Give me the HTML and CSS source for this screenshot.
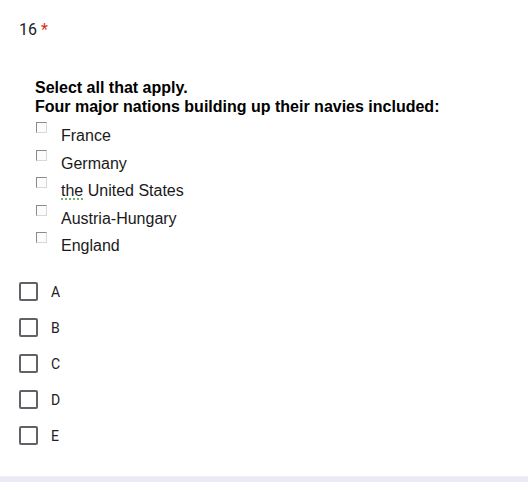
FILE: index.html
```html
<!DOCTYPE html>
<html>
<head>
<meta charset="utf-8">
<link rel="stylesheet" href="styles.css">
</head>
<body>
<div class="card">
  <div class="qnum">16 <span class="req">*</span></div>
  <div class="prompt">
    <div>Select all that apply.</div>
    <div>Four major nations building up their navies included:</div>
    <ul class="opts">
      <li><span class="cb"></span><span>France</span></li>
      <li><span class="cb"></span><span>Germany</span></li>
      <li><span class="cb"></span><span><span class="spell">the</span> United States</span></li>
      <li><span class="cb"></span><span>Austria-Hungary</span></li>
      <li><span class="cb"></span><span>England</span></li>
    </ul>
  </div>
  <ul class="choices">
    <li><span class="box"></span><span>A</span></li>
    <li><span class="box"></span><span>B</span></li>
    <li><span class="box"></span><span>C</span></li>
    <li><span class="box"></span><span>D</span></li>
    <li><span class="box"></span><span>E</span></li>
  </ul>
</div>
</body>
</html>
```
FILE: styles.css
```css
html, body {
  margin: 0;
  padding: 0;
}
body {
  background: #ebe9f5;
  height: 482px;
  overflow: hidden;
}
.card {
  background: #fff;
  height: 477px;
  box-sizing: border-box;
  border-bottom: 1px solid #f0eff4;
  padding: 18px 0 0 19px;
}
.qnum {
  font-family: Roboto, "Liberation Sans", sans-serif;
  font-size: 16px;
  line-height: 24px;
  color: #202124;
}
.req {
  color: #d93025;
}
.prompt {
  margin-top: 36px;
  padding-left: 16px;
  font-family: "Liberation Sans", Arial, sans-serif;
  font-weight: bold;
  font-size: 16px;
  line-height: 19px;
  color: #000;
}
.opts {
  list-style: none;
  margin: 6px 0 0 0;
  padding: 0 0 0 1px;
  font-weight: normal;
  color: #1a1a1a;
}
.opts li {
  display: flex;
  align-items: flex-start;
  height: 27.5px;
  line-height: 27.5px;
}
.cb {
  width: 11px;
  height: 11px;
  box-sizing: border-box;
  margin-top: 0;
  margin-right: 14px;
  border-top: 1px solid #8a8a8a;
  border-left: 1px solid #8a8a8a;
  border-right: 1px solid #d8d8d8;
  border-bottom: 1px solid #d8d8d8;
  background: #fcfcfc;
  flex: none;
}
.spell {
  text-decoration: underline dotted #3c9a3c;
  text-underline-offset: 3px;
}
.choices {
  list-style: none;
  margin: 14px 0 0 0;
  padding: 0;
  font-family: Roboto, "Liberation Sans", sans-serif;
  font-size: 14px;
  color: #202124;
}
.choices li {
  display: flex;
  align-items: center;
  height: 36px;
}
.box {
  width: 19px;
  height: 19px;
  box-sizing: border-box;
  border: 2px solid #5f6368;
  border-radius: 2px;
  margin-right: 13px;
  flex: none;
}
```
